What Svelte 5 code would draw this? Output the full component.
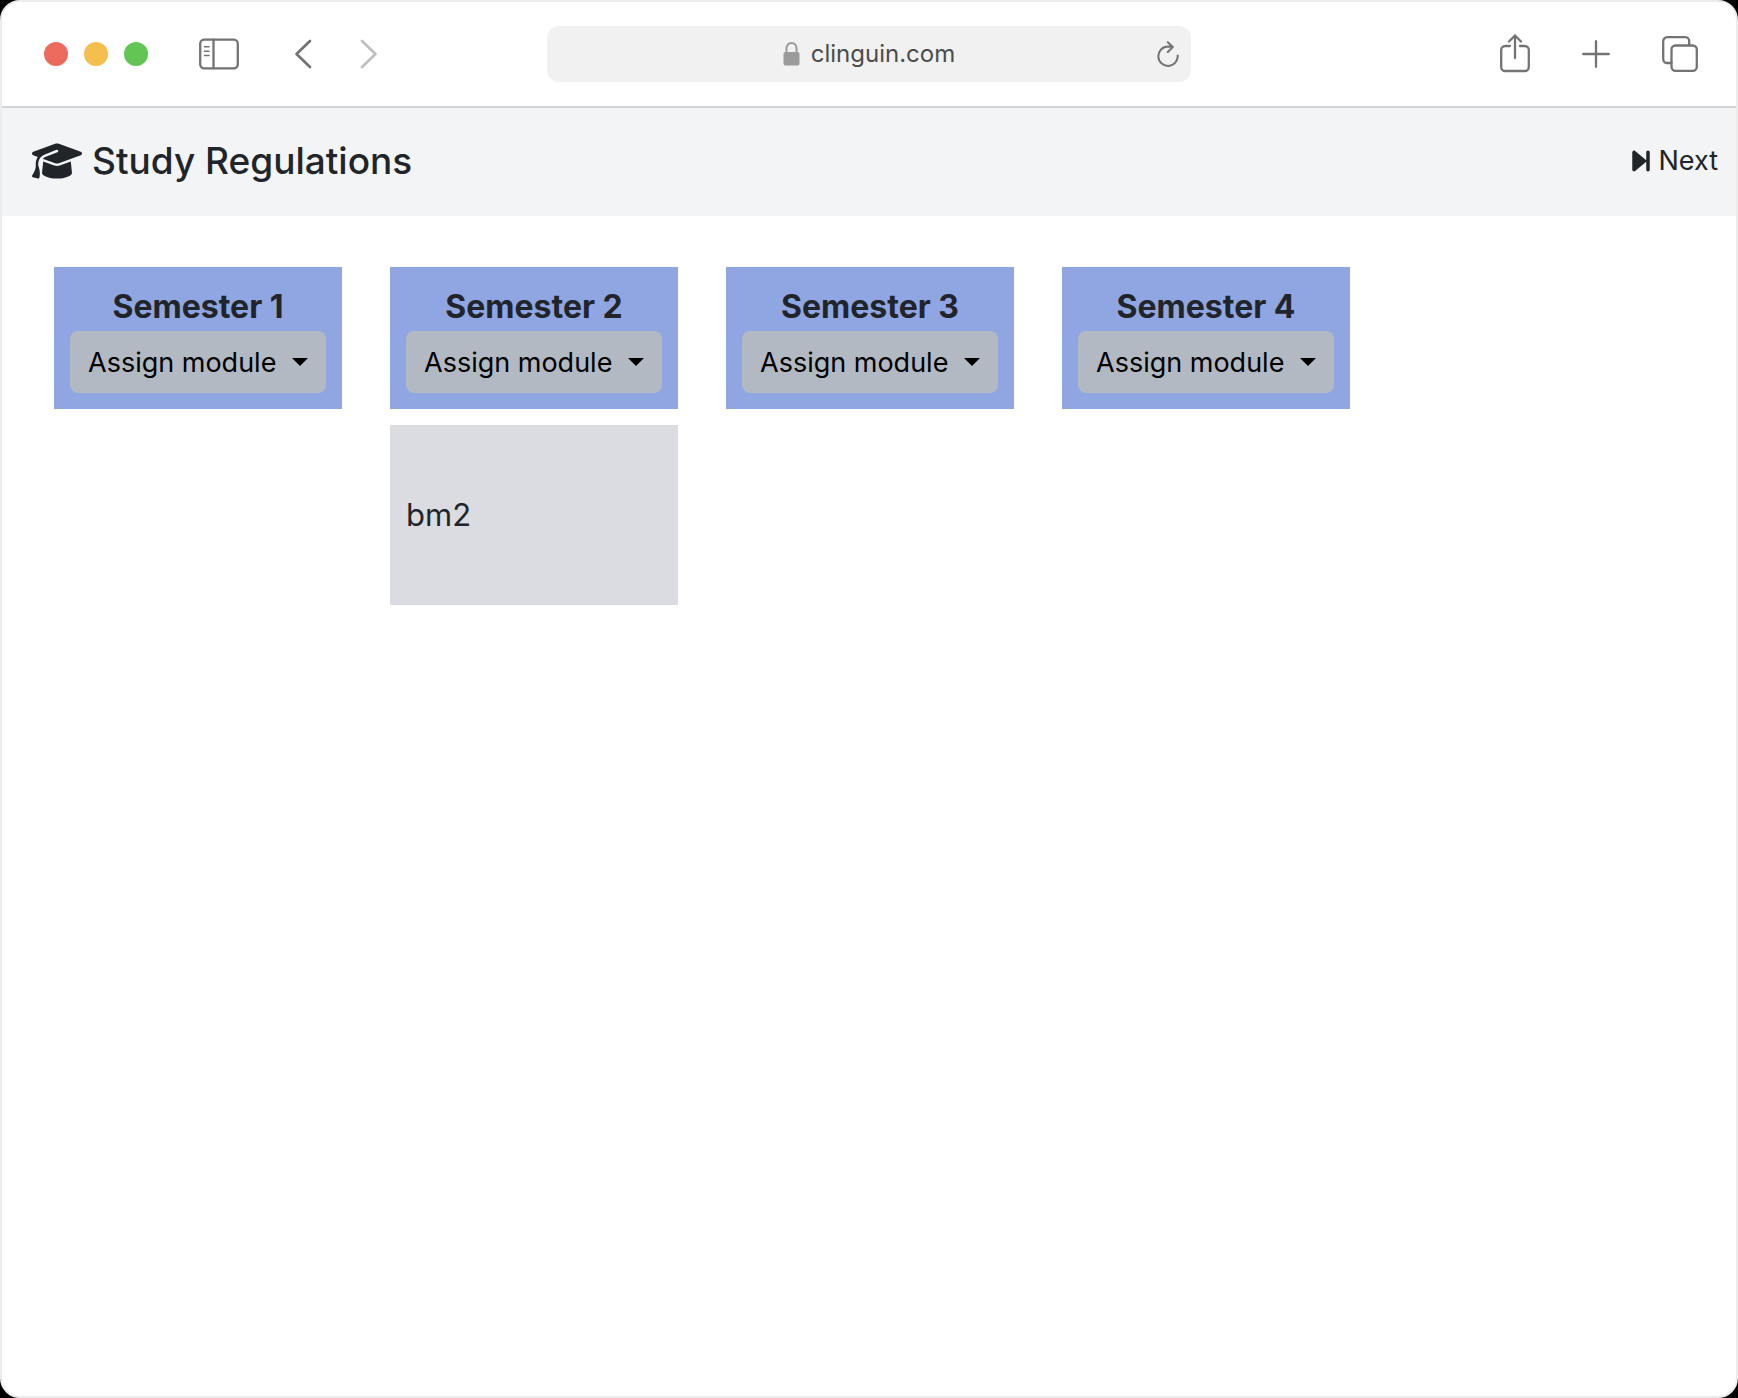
<script>
  const semesters = [
    { id: 1, modules: [] },
    { id: 2, modules: ['bm2'] },
    { id: 3, modules: [] },
    { id: 4, modules: [] },
  ];
  let address = $state('clinguin.com');
</script>

<div class="window">
  <div class="toolbar">
    <div class="side">
      <div class="lights">
        <button class="light close" aria-label="Close"></button>
        <button class="light minimise" aria-label="Minimise"></button>
        <button class="light zoom" aria-label="Zoom"></button>
      </div>
      <button class="tool sidebar" aria-label="Toggle sidebar">
        <svg width="40" height="32" viewBox="0 0 40 32">
          <rect x="1.2" y="1.7" width="37.6" height="28.600" rx="4" />
          <path d="M14.5 1.7v28.6" />
          <path class="thin" d="M5.5 8.8h4.5M5.5 13.2h4.5M5.5 17.4h4.5" />
        </svg>
      </button>
      <button class="tool back" aria-label="Back">
        <svg width="18" height="30" viewBox="0 0 18 30"><path d="M16 2 2.5 15 16 28" /></svg>
      </button>
      <button class="tool forward" aria-label="Forward">
        <svg width="18" height="30" viewBox="0 0 18 30"><path d="M2 2l13.5 13L2 28" /></svg>
      </button>
    </div>

    <div class="address">
      <div class="place">
        <svg class="lock" width="17" height="24" viewBox="0 0 17 24">
          <rect x="0.5" y="10" width="16" height="13.5" rx="2" />
          <path d="M3.5 11V6.5C3.5 3.2 5.6 1 8.5 1s5 2.2 5 5.5V11" />
        </svg>
        <input type="text" aria-label="Address" spellcheck="false" bind:value={address} />
      </div>
      <button class="tool reload" aria-label="Reload">
        <svg width="22" height="26" viewBox="0 0 22 26">
          <path d="M20.7 14.5A9.7 9.7 0 1 1 11 5.5L15.8 5.7M10.8 1.2l5 4.800-5 5" />
        </svg>
      </button>
    </div>

    <div class="side end">
      <button class="tool" aria-label="Share">
        <svg width="30" height="40" viewBox="0 0 30 40">
          <path d="M10 12H5.200a4 4 0 0 0-4 4v17a4 4 0 0 0 4 4h19.600a4 4 0 0 0 4-4V16a4 4 0 0 0-4-4h-4.800" />
          <path d="M15 24V1.500M9 7.500l6-6 6 6" />
        </svg>
      </button>
      <button class="tool" aria-label="New tab">
        <svg width="28" height="28" viewBox="0 0 28 28"><path d="M14 1.200v25.600M1.200 14h25.600" /></svg>
      </button>
      <button class="tool" aria-label="Show all tabs">
        <svg width="36" height="36" viewBox="0 0 36 36">
          <path d="M9.500 27H5.200a4 4 0 0 1-4-4V5.200a4 4 0 0 1 4-4h18a4 4 0 0 1 4 4v4" />
          <rect x="9.500" y="9.500" width="25.300" height="25.300" rx="4" />
        </svg>
      </button>
    </div>
  </div>

  <header class="appbar">
    <h1>
      <svg width="50" height="40" viewBox="0 0 640 512" aria-hidden="true">
        <path d="M320 32c-8.100 0-16.100 1.400-23.700 4.100L15.800 137.400C6.300 140.900 0 149.900 0 160s6.300 19.100 15.800 22.600l57.900 20.900C57.300 229.300 48 259.800 48 291.900v28.100c0 28.400-10.800 57.700-22.300 80.800c-6.500 13-13.900 25.800-22.500 37.600C0 442.700-.9 448.300 .9 453.400s6 8.900 11.200 10.200l64 16c4.200 1.100 8.700 .3 12.400-2s6.300-6.100 7.100-10.400c8.600-42.800 4.300-81.200-2.100-108.700C90.300 344.300 86 329.800 80 316.500V291.900c0-30.200 10.200-58.700 27.900-81.500c12.900-15.500 29.600-28 49.200-35.700l157-61.700c8.200-3.200 17.500 .8 20.700 9s-.8 17.500-9 20.700l-157 61.700c-12.400 4.900-23.300 12.400-32.200 21.600l159.600 57.600c7.600 2.700 15.600 4.100 23.700 4.100s16.100-1.400 23.700-4.100L624.200 182.600c9.500-3.400 15.800-12.500 15.800-22.600s-6.300-19.100-15.800-22.600L343.700 36.100C336.100 33.400 328.100 32 320 32zM128 408c0 35.300 86 72 192 72s192-36.700 192-72L496.700 262.600 354.500 314c-11.100 4-22.800 6-34.500 6s-23.500-2-34.500-6L143.300 262.600 128 408z" />
      </svg>
      Study Regulations
    </h1>
    <button class="next">
      <svg width="18" height="28" viewBox="0 0 320 512" aria-hidden="true">
        <path d="M52.500 440.600c-9.500 7.900-22.800 9.700-34.100 4.400S0 428.400 0 416V96C0 83.600 7.200 72.300 18.400 67s24.500-3.600 34.100 4.400l192 160L256 241V96c0-17.700 14.300-32 32-32s32 14.300 32 32V416c0 17.700-14.300 32-32 32s-32-14.300-32-32V271l-11.500 9.600-192 160z" />
      </svg>
      Next
    </button>
  </header>

  <main class="plan">
    {#each semesters as semester (semester.id)}
      <section class="semester">
        <div class="card">
          <label for="assign-{semester.id}">Semester {semester.id}</label>
          <div class="dropdown">
            <select id="assign-{semester.id}">
              <option>Assign module</option>
            </select>
            <svg class="caret" width="16" height="8" viewBox="0 0 16 8" aria-hidden="true"><path d="M0 0h16L8 8z" /></svg>
          </div>
        </div>
        {#each semester.modules as name}
          <div class="module">{name}</div>
        {/each}
      </section>
    {/each}
  </main>
</div>

<style>
  :global(body) {
    background: #000;
  }

  .window {
    box-sizing: border-box;
    min-height: 100vh;
    overflow: hidden;
    border: 2px solid #ececec;
    border-radius: 20px;
    background: #fff;
    color: #212529;
    font-family: Inter, "Liberation Sans", sans-serif;
  }

  button {
    padding: 0;
    border: 0;
    background: none;
    color: inherit;
    font: inherit;
  }

  svg {
    display: block;
    flex: none;
  }

  .toolbar {
    display: grid;
    grid-template-columns: 1fr minmax(0, 644px) 1fr;
    align-items: center;
    height: 104px;
    border-bottom: 2px solid #d3d5d8;
  }

  .side {
    display: flex;
    align-items: center;
    padding-left: 42px;
  }

  .end {
    justify-content: flex-end;
    gap: 52px;
    padding: 0 38px 0 0;
  }

  .lights {
    display: flex;
    gap: 16px;
  }

  .light {
    width: 24px;
    height: 24px;
    border-radius: 50%;
  }

  .close {
    background: #ed6a5e;
  }

  .minimise {
    background: #f5bf4f;
  }

  .zoom {
    background: #62c554;
  }

  .tool svg {
    fill: none;
    stroke: #737373;
    stroke-width: 2.3;
    stroke-linecap: round;
    stroke-linejoin: round;
  }

  .sidebar {
    margin-left: 51px;
  }

  .sidebar .thin {
    stroke-width: 1.5;
  }

  .back {
    margin-left: 55px;
  }

  .forward {
    margin-left: 48px;
  }

  .back svg,
  .forward svg {
    stroke-width: 2.7;
  }

  .forward svg {
    stroke: #bfbfbf;
  }

  .address {
    display: grid;
    grid-template-columns: 1fr auto 1fr;
    align-items: center;
    height: 56px;
    border-radius: 12px;
    background: #f1f1f1;
  }

  .place {
    grid-column: 2;
    display: flex;
    align-items: center;
    gap: 11px;
  }

  .place input {
    field-sizing: content;
    padding: 0;
    border: 0;
    outline: 0;
    background: none;
    color: #4c4c4c;
    font-family: inherit;
    font-size: 24px;
    line-height: 32px;
  }

  .lock rect {
    fill: #9b9b9b;
  }

  .lock path {
    fill: none;
    stroke: #9b9b9b;
    stroke-width: 2;
  }

  .reload {
    justify-self: end;
    margin-right: 12px;
  }

  .reload svg {
    stroke-width: 2;
  }

  .appbar {
    display: flex;
    align-items: center;
    justify-content: space-between;
    box-sizing: border-box;
    height: 108px;
    padding: 0 18px 3px 30px;
    background: #f3f4f6;
  }

  h1 {
    display: flex;
    align-items: center;
    gap: 10px;
    margin: 0;
    font-size: 37px;
    font-weight: 500;
    line-height: 48px;
  }

  h1 svg,
  .next svg,
  .caret {
    fill: currentColor;
  }

  .next {
    display: flex;
    align-items: center;
    gap: 8px;
    font-size: 27px;
    line-height: 40px;
  }

  .plan {
    display: grid;
    grid-template-columns: repeat(5, minmax(0, 1fr));
    gap: 48px;
    padding: 51px 50px 48px 52px;
  }

  .semester {
    display: flex;
    flex-direction: column;
    gap: 16px;
  }

  .card {
    padding: 16px;
    background: #8fa6e3;
  }

  label {
    display: block;
    font-size: 32px;
    font-weight: 700;
    line-height: 48px;
    text-align: center;
  }

  .dropdown {
    display: grid;
    align-items: center;
    color: #000;
  }

  select {
    grid-area: 1 / 1;
    appearance: none;
    width: 100%;
    height: 62px;
    padding: 0 18px;
    border: 0;
    border-radius: 8px;
    background: #b3b9c3;
    color: inherit;
    font-family: inherit;
    font-size: 27px;
  }

  .caret {
    grid-area: 1 / 1;
    justify-self: end;
    margin-right: 18px;
    pointer-events: none;
  }

  .module {
    display: flex;
    align-items: center;
    min-height: 180px;
    padding: 0 16px;
    background: #dadce1;
    font-size: 31px;
    line-height: 48px;
  }
</style>
